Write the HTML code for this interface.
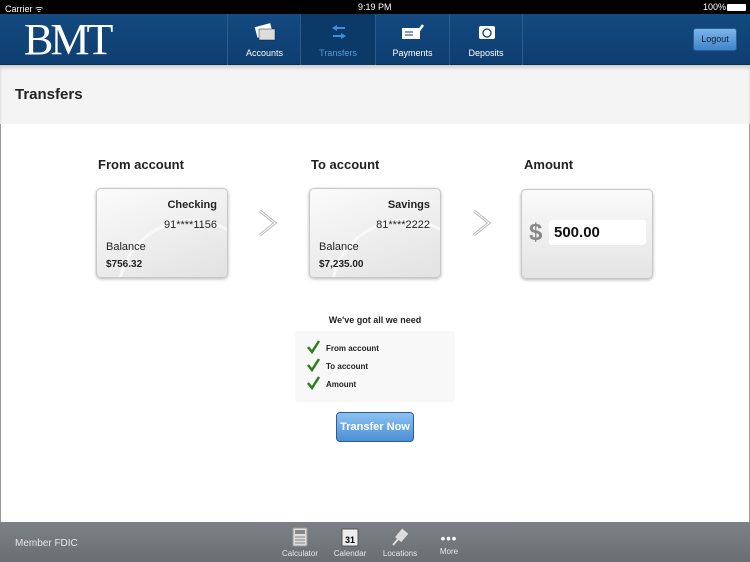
<!DOCTYPE html>
<html><head><meta charset="utf-8"><style>
*{margin:0;padding:0;box-sizing:border-box}
body{width:750px;height:562px;overflow:hidden;font-family:"Liberation Sans",sans-serif;background:#fff;position:relative}
.abs{position:absolute}
.status{top:0;left:0;width:750px;height:14px;background:#000;color:#fff;font-size:9px}
.nav{top:14px;left:0;width:750px;height:51px;background:linear-gradient(#134a80,#0e3e70);border-bottom:1px solid #0a2e55}
.item{top:0;height:51px;border-left:1px solid #2c5c8e;color:#fff;font-size:9px;text-align:center}
.item span{position:absolute;bottom:7px;left:0;right:0}
.gray{top:65px;left:0;width:750px;height:59px;background:#f4f4f4;box-shadow:inset 0 3px 3px rgba(0,0,0,.15)}
.card{width:132px;height:90px;border:1px solid #c8c8c8;border-radius:5px;background:linear-gradient(160deg,#fbfbfb,#e2e2e2);box-shadow:0 1px 3px rgba(0,0,0,.3);overflow:hidden;font-size:11px;color:#222}
.lbl{font-size:13px;font-weight:bold;color:#222}
.foot{top:522px;left:0;width:750px;height:40px;background:linear-gradient(#7c8186,#6a6f74);color:#e8e8e8;font-size:8px}
.fi{top:0;width:50px;text-align:center}
</style></head><body>
<div class="abs status"><span class="abs" style="left:5px;top:2px">Carrier ᯤ</span><span class="abs" style="left:358px;top:2px">9:19 PM</span><span class="abs" style="left:703px;top:2px">100%</span><span class="abs" style="left:727px;top:4px;width:19px;height:7px;background:#fff;border-radius:1px"></span></div>
<div class="abs nav">
<div class="abs" style="left:24px;top:3px;font-family:'Liberation Serif',serif;font-size:44px;color:#fff;letter-spacing:-3px;line-height:46px">BMT</div>
<div class="abs item" style="left:227px;width:74px"><svg class="abs" style="left:26px;top:9px" width="22" height="18"><rect x="2" y="2" width="16" height="11" fill="#fff" transform="rotate(-15 10 8)"/><rect x="5" y="6" width="16" height="11" fill="#ddd" stroke="#123" stroke-width=".5"/></svg><span>Accounts</span></div>
<div class="abs item" style="left:300px;width:75px;background:#0b3a68;color:#5a9ad6"><svg class="abs" style="left:30px;top:9px" width="16" height="18"><path d="M6 2L1 5L6 8V6H14V4H6Z M10 10L15 13L10 16V14H2V12H10Z" fill="#3d8ee0"/></svg><span>Transfers</span></div>
<div class="abs item" style="left:375px;width:74px"><svg class="abs" style="left:25px;top:9px" width="24" height="18"><rect x="1" y="5" width="18" height="11" fill="#fff"/><path d="M4 9h8M4 12h8" stroke="#0e3e70"/><path d="M14 13L22 2" stroke="#fff" stroke-width="2.5"/></svg><span>Payments</span></div>
<div class="abs item" style="left:449px;width:74px;border-right:1px solid #2c5c8e"><svg class="abs" style="left:28px;top:9px" width="18" height="18"><rect x="1" y="3" width="16" height="13" rx="2" fill="#fff"/><circle cx="9" cy="10" r="4" fill="none" stroke="#0e3e70" stroke-width="1.3"/></svg><span>Deposits</span></div>
<div class="abs" style="left:693px;top:14px;width:44px;height:23px;border-radius:3px;background:linear-gradient(#7cb6ea,#3f85cc);border:1px solid #2a5f9a;color:#123;font-size:9px;text-align:center;line-height:21px">Logout</div>
</div>
<div class="abs gray"><div class="abs" style="left:15px;top:21px;font-size:15px;font-weight:bold;color:#222">Transfers</div></div>
<div class="abs" style="left:0;top:124px;width:1px;height:398px;background:#999"></div>
<div class="abs" style="left:749px;top:124px;width:1px;height:398px;background:#999"></div>

<div class="abs lbl" style="left:98px;top:157px">From account</div>
<div class="abs lbl" style="left:311px;top:157px">To account</div>
<div class="abs lbl" style="left:524px;top:157px">Amount</div>

<div class="abs card" style="left:96px;top:188px"><div class="abs" style="left:20px;top:30px;width:150px;height:150px;border-radius:50%;border:3px solid rgba(255,255,255,.6)"></div><b class="abs" style="right:10px;top:10px">Checking</b><span class="abs" style="right:10px;top:30px">91****1156</span><span class="abs" style="left:9px;top:52px">Balance</span><b class="abs" style="left:9px;top:70px;font-size:10px">$756.32</b></div>
<div class="abs card" style="left:309px;top:188px"><div class="abs" style="left:20px;top:30px;width:150px;height:150px;border-radius:50%;border:3px solid rgba(255,255,255,.6)"></div><b class="abs" style="right:10px;top:10px">Savings</b><span class="abs" style="right:10px;top:30px">81****2222</span><span class="abs" style="left:9px;top:52px">Balance</span><b class="abs" style="left:9px;top:70px;font-size:10px">$7,235.00</b></div>
<svg class="abs" style="left:257px;top:208px" width="22" height="30"><path d="M3 3L18 15L3 27" fill="none" stroke="#bbb" stroke-width="3"/><path d="M3 3L18 15L3 27" fill="none" stroke="#fff" stroke-width="1"/></svg>
<svg class="abs" style="left:471px;top:208px" width="22" height="30"><path d="M3 3L18 15L3 27" fill="none" stroke="#bbb" stroke-width="3"/><path d="M3 3L18 15L3 27" fill="none" stroke="#fff" stroke-width="1"/></svg>
<div class="abs card" style="left:521px;top:189px;background:linear-gradient(#fafafa,#e4e4e4)"><span class="abs" style="left:7px;top:29px;font-size:24px;font-weight:bold;color:#888">$</span><div class="abs" style="left:27px;top:30px;width:97px;height:25px;background:#fff;border-radius:3px;font-size:15px;font-weight:bold;line-height:25px;padding-left:5px;color:#111">500.00</div></div>

<div class="abs" style="left:0;top:315px;width:750px;text-align:center;font-size:9px;font-weight:bold;color:#222">We've got all we need</div>
<div class="abs" style="left:295px;top:331px;width:160px;height:71px;background:#f8f8f8;border-radius:3px;font-size:8px;font-weight:bold;color:#222">
<div class="abs" style="left:31px;top:13px">From account</div><div class="abs" style="left:31px;top:31px">To account</div><div class="abs" style="left:31px;top:49px">Amount</div>
<svg class="abs" style="left:12px;top:9px" width="14" height="56"><path d="M1 7L5 12L12 1M1 25L5 30L12 19M1 43L5 48L12 37" fill="none" stroke="#2e7d1e" stroke-width="2.5"/></svg></div>
<div class="abs" style="left:336px;top:412px;width:78px;height:30px;border-radius:4px;border:1px solid #2c5e96;background:linear-gradient(#8cc2f0,#4a8fd6);color:#fff;font-size:11px;font-weight:bold;text-align:center;line-height:28px;white-space:nowrap">Transfer Now</div>

<div class="abs foot">
<div class="abs" style="left:15px;top:16px;font-size:10px">Member FDIC</div>
<div class="abs fi" style="left:275px"><svg style="margin-top:5px" width="16" height="20"><rect x="1" y="1" width="14" height="18" rx="1" fill="#ddd" stroke="#999"/><rect x="3" y="3" width="10" height="4" fill="#888"/><path d="M3 10h10M3 13h10M3 16h10" stroke="#888"/></svg><div>Calculator</div></div>
<div class="abs fi" style="left:325px"><svg style="margin-top:5px" width="18" height="20"><rect x="1" y="2" width="16" height="17" fill="#eee" stroke="#555"/><text x="9" y="16" font-size="9" font-weight="bold" text-anchor="middle" font-family="Liberation Sans">31</text></svg><div>Calendar</div></div>
<div class="abs fi" style="left:375px"><svg style="margin-top:5px" width="20" height="20"><path d="M3 18L9 11" stroke="#ddd" stroke-width="2"/><rect x="8" y="3" width="8" height="11" fill="#ddd" transform="rotate(40 12 8)"/></svg><div>Locations</div></div>
<div class="abs fi" style="left:424px"><div style="margin-top:9px;font-size:13px;font-weight:bold;letter-spacing:1px;color:#fff;height:16px">•••</div><div>More</div></div>
</div>
</body></html>
